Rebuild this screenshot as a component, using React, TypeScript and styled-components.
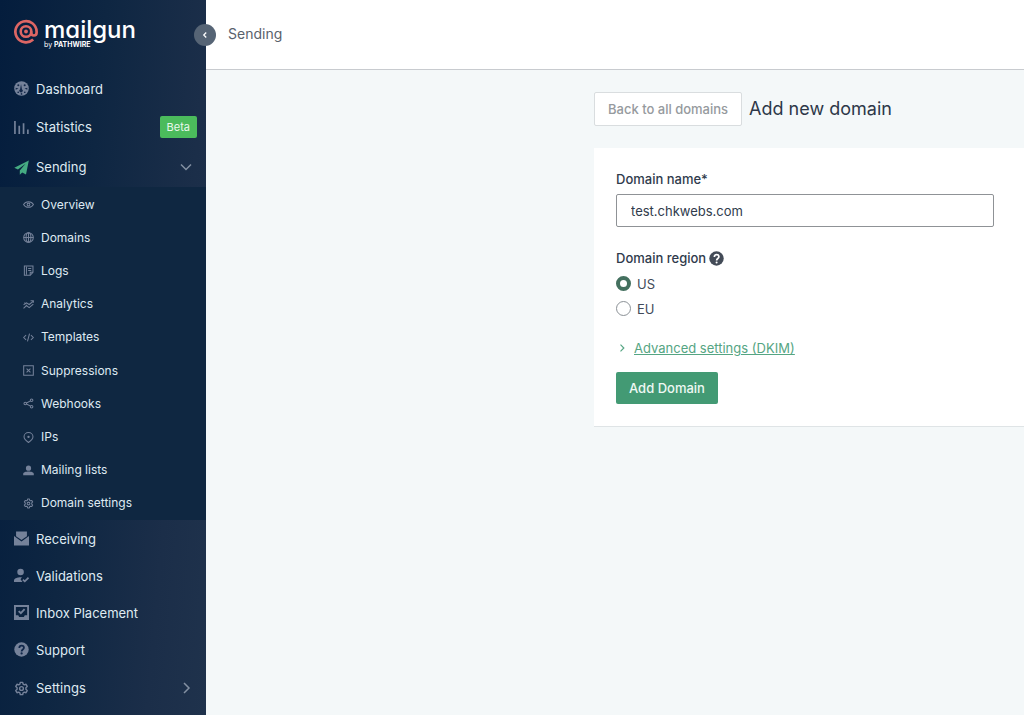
import React from "react";
import styled, { createGlobalStyle, css } from "styled-components";

const GlobalStyle = createGlobalStyle`
  *, *::before, *::after { box-sizing: border-box; }
  body {
    margin: 0;
    background: #f4f8f9;
    color: #2f3b4c;
    font-family: Inter, "Liberation Sans", sans-serif;
    font-size: 13px;
    line-height: 20px;
  }
  button, input { font: inherit; }
`;

const Shell = styled.div`
  display: flex;
  min-height: 100vh;
`;

const Sidebar = styled.aside`
  position: relative;
  flex: 0 0 206px;
  background: linear-gradient(95deg, #041d3d 0%, #0e2642 40%, #1b2e49 78%, #1f324c 100%);
`;

const Brand = styled.a`
  display: flex;
  align-items: flex-start;
  gap: 6px;
  height: 70px;
  padding: 19px 14px 0;
  color: #fff;
  text-decoration: none;
`;

const BrandText = styled.span`
  display: flex;
  flex-direction: column;
`;

const Wordmark = styled.span`
  font-size: 24px;
  font-weight: 500;
  line-height: 22px;
  font-feature-settings: "cv11";
`;

const Byline = styled.span`
  font-size: 7px;
  line-height: 8px;
  b { font-weight: 700; }
`;

const Collapse = styled.button`
  position: absolute;
  top: 24px;
  right: -10px;
  display: grid;
  place-items: center;
  width: 22px;
  height: 22px;
  padding: 0;
  border: 0;
  border-radius: 50%;
  background: #566475;
  color: #fff;
`;

const NavLink = styled.a<{ $tall?: boolean }>`
  display: flex;
  align-items: center;
  gap: 7px;
  height: ${(p) => (p.$tall ? 40 : 37)}px;
  padding: 0 9px 0 14px;
  color: #dfeaf2;
  text-decoration: none;
`;

const NavIcon = styled.svg<{ $size: number; $color?: string }>`
  flex: none;
  width: ${(p) => p.$size}px;
  height: ${(p) => p.$size}px;
  color: ${(p) => p.$color || "#75829a"};
`;

const NavLabel = styled.span`
  flex: 1;
`;

const Badge = styled.span`
  padding: 0 7px;
  border-radius: 2px;
  background: #4bbb5c;
  color: #e9f8ec;
  font-size: 11px;
  line-height: 22px;
`;

const ArrowSlot = styled.span`
  display: flex;
  padding-right: 5px;
  color: #8390a2;
`;

const SubNav = styled.div`
  display: flex;
  flex-direction: column;
  justify-content: space-between;
  height: 333px;
  padding-top: 1px;
  background: #0f2741;
`;

const SubLink = styled.a`
  display: flex;
  align-items: center;
  gap: 7px;
  height: 33px;
  padding-left: 23px;
  color: #dfeaf2;
  font-size: 12px;
  text-decoration: none;
`;

const Main = styled.div`
  flex: 1;
  min-width: 0;
`;

const Header = styled.header`
  display: flex;
  align-items: center;
  height: 70px;
  padding: 0 22px 2px;
  border-bottom: 1px solid #c8cbcf;
  background: #fff;
  color: #59616c;
  font-size: 14px;
`;

const Content = styled.main`
  padding: 22px 0 22px 388px;
`;

const TitleRow = styled.div`
  display: flex;
  align-items: center;
  gap: 7px;
  margin-bottom: 22px;
`;

const Title = styled.h1`
  margin: 0;
  color: #2d3748;
  font-size: 18px;
  font-weight: 400;
  line-height: 24px;
`;

const buttonBase = css`
  padding: 0 13px;
  border-radius: 2px;
  font-weight: 500;
  white-space: nowrap;
`;

const BackButton = styled.button`
  ${buttonBase}
  height: 34px;
  border: 1px solid #d9dddf;
  background: #fff;
  color: #969a9e;
`;

const PrimaryButton = styled.button`
  ${buttonBase}
  height: 32px;
  border: 0;
  background: #439a74;
  color: #eef8f3;
`;

const Card = styled.form`
  padding: 21px 30px 22px 22px;
  border-bottom: 1px solid #dfe4e6;
  background: #fff;
`;

const FieldLabel = styled.label`
  display: block;
  margin-bottom: 5px;
  font-weight: 500;
`;

const TextInput = styled.input`
  display: block;
  width: 100%;
  height: 33px;
  margin-bottom: 21px;
  padding: 0 14px;
  border: 1px solid #8f9296;
  border-radius: 2px;
  background: #fff;
  color: #2f3b4c;
  outline: 0;
`;

const Fieldset = styled.fieldset`
  margin: 0 0 17px;
  padding: 0;
  border: 0;
`;

const Legend = styled.legend`
  display: flex;
  align-items: center;
  gap: 3px;
  margin-bottom: 3px;
  padding: 0;
  font-weight: 500;
`;

const Choice = styled.label`
  display: flex;
  align-items: center;
  gap: 6px;
  height: 25px;
  color: #414b5a;
`;

const Radio = styled.input`
  appearance: none;
  width: 15px;
  height: 15px;
  margin: 0;
  border: 1px solid #8b9196;
  border-radius: 50%;
  background: #fff;
  &:checked { border: 4px solid #44705f; }
`;

const Advanced = styled.a`
  display: flex;
  align-items: center;
  gap: 6px;
  margin-bottom: 14px;
  padding-left: 2px;
  color: #55a583;
  span { text-decoration: underline; }
`;

type IconName =
  | "dashboard" | "stats" | "send" | "eye" | "globe" | "log" | "analytics" | "code"
  | "suppress" | "share" | "pin" | "user" | "gear" | "receive" | "validate" | "inbox" | "help";

const line = { fill: "none", stroke: "currentColor", strokeWidth: 1.5 };
const gearPath =
  "M6.7 1.5h2.6l.4 1.8 1.3.8 1.8-.6 1.3 2.3-1.4 1.3v1.8l1.4 1.3-1.3 2.3-1.8-.6-1.3.8-.4 1.8H6.7l-.4-1.8-1.3-.8-1.8.6-1.3-2.3 1.4-1.3V7.1L1.9 5.8l1.3-2.3 1.8.6 1.3-.8z";

const glyphs: Record<IconName, React.ReactNode> = {
  dashboard: (
    <>
      <circle cx="8" cy="8" r="7.8" fill="currentColor" />
      <g fill="#14294a">
        <path d="M7.5 3.3l1 5.4a1.9 1.9 0 1 1-2 0z" />
        <path d="M1.800 7.300l3 .8-3 1.200zM14.200 7.300l-3 .8 3 1.200z" />
        <circle cx="4.6" cy="4.6" r="1.1" />
        <circle cx="11.4" cy="4.600" r="1.1" />
        <circle cx="4.500" cy="12" r=".9" />
        <circle cx="11.500" cy="12" r=".9" />
        <circle cx="8" cy="13.800" r=".9" />
      </g>
    </>
  ),
  stats: <path d="M1 1v14M5.6 6v9M10.2 3.5V15M14.8 10v5" {...line} strokeWidth={1.8} />,
  send: <path d="M15.8.4L.3 8.2l3.900 2L12.300 4 6.200 11.200v4.400l2.600-2.400 4 2.200z" fill="currentColor" />,
  eye: (
    <>
      <path d="M.8 8C3.8 2.500 12.200 2.500 15.200 8 12.200 13.500 3.800 13.500 .8 8z" {...line} />
      <circle cx="8" cy="8" r="2" {...line} />
    </>
  ),
  globe: (
    <>
      <circle cx="8" cy="8" r="7" {...line} />
      <ellipse cx="8" cy="8" rx="3.5" ry="7" {...line} />
      <path d="M1 8h14M8 1v14" {...line} />
    </>
  ),
  log: (
    <>
      <path d="M2 1.5h12.500v9L10.500 15H2z" {...line} />
      <path d="M10.5 15v-4.500h4M5 2v12M7.500 5H12M7.500 8H12" {...line} />
    </>
  ),
  analytics: (
    <>
      <path d="M.8 8.5L5 5.500l4 2.500 6.200-5M.8 13.500L5 9.500l4 3 6-5" {...line} />
      <path d="M2 5.500l3 2M11 2.500h4v3" {...line} />
    </>
  ),
  code: <path d="M4.5 4.500L1 8l3.500 3.500M11.500 4.500L15 8l-3.500 3.500M9.500 2.500l-3 11" {...line} />,
  suppress: (
    <>
      <path d="M1 1h14v14H1z" {...line} />
      <path d="M5.2 5.200l5.600 5.600M10.800 5.200l-5.600 5.600" {...line} />
    </>
  ),
  share: (
    <>
      <path d="M3.5 8l9-4.500M3.500 8l9 4.500" {...line} />
      <g fill="#0f2741" stroke="currentColor" strokeWidth="1.500">
        <circle cx="3.3" cy="8" r="1.900" />
        <circle cx="12.5" cy="3.300" r="1.900" />
        <circle cx="12.5" cy="12.700" r="1.900" />
      </g>
    </>
  ),
  pin: (
    <>
      <path d="M8 15.200C4.500 12.800 1.500 10.500 1.500 7a6.500 6.200 0 0 1 13 0c0 3.500-3 5.800-6.500 8.200z" {...line} />
      <circle cx="8" cy="7" r="1.700" fill="currentColor" />
    </>
  ),
  user: (
    <path d="M8 .8a3.700 3.700 0 0 1 0 7.600A3.700 3.700 0 0 1 8 .8zM.3 15v-2C.3 10.800 4.500 9.600 8 9.600s7.700 1.200 7.700 3.400v2z" fill="currentColor" />
  ),
  gear: (
    <>
      <path d={gearPath} {...line} strokeLinejoin="round" />
      <circle cx="8" cy="8" r="2" {...line} />
    </>
  ),
  receive: (
    <>
      <path d="M2.200.5h11.600v5L8 9.600 2.200 5.500z" fill="currentColor" />
      <path d="M0 5.200l8 6 8-6V15.500H0z" fill="currentColor" />
    </>
  ),
  validate: (
    <>
      <circle cx="7" cy="4.300" r="3.500" fill="currentColor" />
      <path d="M0 15v-1.800C0 11 3.500 9.600 8.500 9.800L7 12l2 3z" fill="currentColor" />
      <path d="M9.500 12.300l2 2 4-4" {...line} strokeWidth={1.8} />
    </>
  ),
  inbox: (
    <>
      <path d="M1 1h14v14H1z" {...line} strokeWidth={2} />
      <path d="M1 11h3.500l1 1.800h5l1-1.800H15v4H1z" fill="currentColor" />
      <path d="M5 6.500l2.300 2.300 4-4.300" {...line} strokeWidth={2} />
    </>
  ),
  help: (
    <>
      <circle cx="8" cy="8" r="7.700" fill="currentColor" />
      <path d="M5.700 6.300c0-3.200 4.900-3 4.900-.2C10.600 8 8.100 8 8.100 10" fill="none" stroke="#10274a" strokeWidth="1.900" />
      <circle cx="8.100" cy="12.200" r="1.200" fill="#10274a" />
    </>
  ),
};

function Icon({ name, size, color }: { name: IconName; size: number; color?: string }) {
  return (
    <NavIcon viewBox="0 0 16 16" $size={size} $color={color} aria-hidden="true">
      {glyphs[name]}
    </NavIcon>
  );
}

function Chevron({ d, size = 12, width = 1.5 }: { d: string; size?: number; width?: number }) {
  return (
    <svg width={size} height={size} viewBox="0 0 12 12" fill="none" stroke="currentColor" strokeWidth={width} aria-hidden="true">
      <path d={d} />
    </svg>
  );
}

const subItems: [IconName, string][] = [
  ["eye", "Overview"],
  ["globe", "Domains"],
  ["log", "Logs"],
  ["analytics", "Analytics"],
  ["code", "Templates"],
  ["suppress", "Suppressions"],
  ["share", "Webhooks"],
  ["pin", "IPs"],
  ["user", "Mailing lists"],
  ["gear", "Domain settings"],
];

const lowerItems: [IconName, string][] = [
  ["receive", "Receiving"],
  ["validate", "Validations"],
  ["inbox", "Inbox Placement"],
  ["help", "Support"],
];

function NavItem({ icon, label, color, children }: { icon: IconName; label: string; color?: string; children?: React.ReactNode }) {
  return (
    <NavLink href="#" $tall={!!children}>
      <Icon name={icon} size={15} color={color} />
      <NavLabel>{label}</NavLabel>
      {children}
    </NavLink>
  );
}

export default function App() {
  return (
    <>
      <GlobalStyle />
      <Shell>
        <Sidebar>
          <Brand href="#">
            <svg width="24" height="25" viewBox="0 0 24 25" fill="none" stroke="#dd6664" aria-hidden="true">
              <path d="M19.2 20.500A10.600 10.600 0 1 1 22.600 12.500v1.300a2.700 2.700 0 0 1-5.400 0v-1.300" strokeWidth="2.700" />
              <circle cx="12" cy="12.500" r="5.300" strokeWidth="2.600" />
              <circle cx="12" cy="12.500" r="1.900" fill="#dd6664" stroke="none" />
            </svg>
            <BrandText>
              <Wordmark>mailgun</Wordmark>
              <Byline>by <b>PATHWIRE</b></Byline>
            </BrandText>
          </Brand>
          <nav>
            <NavItem icon="dashboard" label="Dashboard" />
            <NavItem icon="stats" label="Statistics"><Badge>Beta</Badge></NavItem>
            <NavItem icon="send" label="Sending" color="#45ab82">
              <ArrowSlot><Chevron d="M1 3.500l5 5 5-5" /></ArrowSlot>
            </NavItem>
            <SubNav>
              {subItems.map(([icon, label]) => (
                <SubLink href="#" key={label}>
                  <Icon name={icon} size={11} />
                  {label}
                </SubLink>
              ))}
            </SubNav>
            {lowerItems.map(([icon, label]) => (
              <NavItem key={label} icon={icon} label={label} />
            ))}
            <NavItem icon="gear" label="Settings">
              <ArrowSlot><Chevron d="M4 1l5 5-5 5" /></ArrowSlot>
            </NavItem>
          </nav>
          <Collapse aria-label="Collapse menu"><Chevron d="M7.500 3L4.500 6l3 3" size={10} /></Collapse>
        </Sidebar>
        <Main>
          <Header>Sending</Header>
          <Content>
            <TitleRow>
              <BackButton type="button">Back to all domains</BackButton>
              <Title>Add new domain</Title>
            </TitleRow>
            <Card onSubmit={(e) => e.preventDefault()}>
              <FieldLabel htmlFor="domain">Domain name*</FieldLabel>
              <TextInput id="domain" defaultValue="test.chkwebs.com" />
              <Fieldset>
                <Legend>
                  Domain region
                  <svg width="15" height="15" viewBox="0 0 16 16" aria-hidden="true">
                    <circle cx="8" cy="8" r="7.700" fill="#434b57" />
                    <path d="M5.700 6.300c0-3.200 4.900-3 4.900-.2C10.600 8 8.100 8 8.100 10" fill="none" stroke="#fff" strokeWidth="1.800" />
                    <circle cx="8.100" cy="12.200" r="1.100" fill="#fff" />
                  </svg>
                </Legend>
                <Choice><Radio type="radio" name="region" value="us" defaultChecked />US</Choice>
                <Choice><Radio type="radio" name="region" value="eu" />EU</Choice>
              </Fieldset>
              <Advanced href="#">
                <Chevron d="M3 2l4 4-4 4" size={10} width={1.4} />
                <span>Advanced settings (DKIM)</span>
              </Advanced>
              <PrimaryButton type="submit">Add Domain</PrimaryButton>
            </Card>
          </Content>
        </Main>
      </Shell>
    </>
  );
}
